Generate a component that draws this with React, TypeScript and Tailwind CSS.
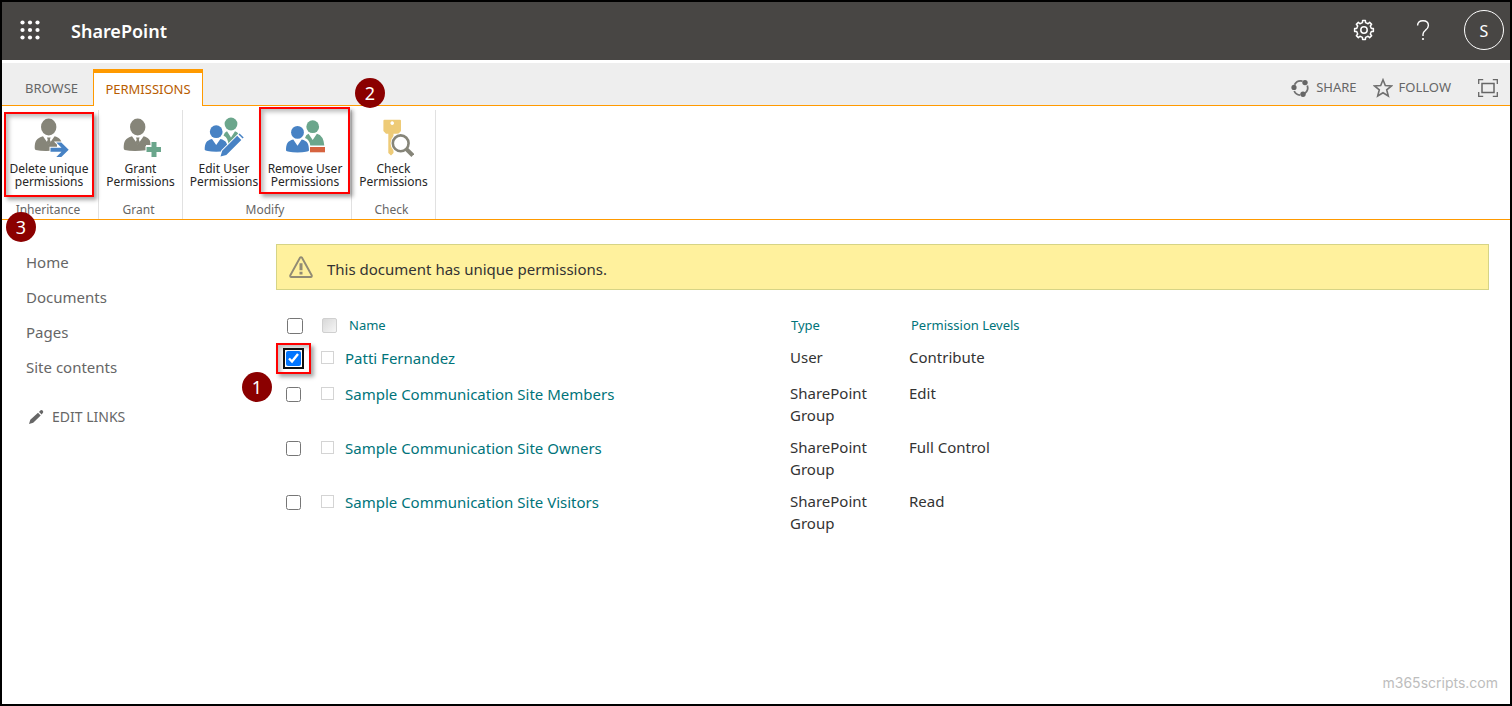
import React from "react";

const PERSON = "#868579";
const BLUE = "#4782c4";
const GREEN = "#6ba68c";

function gearPath(cx: number, cy: number, teeth: number, outer: number, inner: number) {
  const points: string[] = [];
  const step = (Math.PI * 2) / teeth;
  for (let i = 0; i < teeth; i++) {
    const a = i * step - Math.PI / 2;
    const corners: [number, number][] = [
      [a - step * 0.27, inner],
      [a - step * 0.19, outer],
      [a + step * 0.19, outer],
      [a + step * 0.27, inner],
    ];
    corners.forEach(([t, r]) => points.push(`${(cx + r * Math.cos(t)).toFixed(2)} ${(cy + r * Math.sin(t)).toFixed(2)}`));
  }
  return `M${points.join("L")}Z`;
}

function Waffle() {
  const pos = [2.5, 10, 17.5];
  return (
    <svg className="size-5" viewBox="0 0 20 20" fill="white" aria-hidden="true">
      {pos.map((y) => pos.map((x) => <circle key={`${x}-${y}`} cx={x} cy={y} r="2.1" />))}
    </svg>
  );
}

function Gear() {
  return (
    <svg className="size-[22px]" viewBox="0 0 22 22" fill="none" stroke="white" strokeWidth="1.5" strokeLinejoin="round" aria-hidden="true">
      <path d={gearPath(11, 11, 8, 9.5, 7.5)} />
      <circle cx="11" cy="11" r="3.2" />
    </svg>
  );
}

function Help() {
  return (
    <svg className="h-[22px] w-4" viewBox="0 0 16 22" fill="none" stroke="white" strokeWidth="1.4" aria-hidden="true">
      <path d="M2.6 6.6C2.6 3.4 4.9 1.7 8 1.7s5.4 1.8 5.4 4.800c0 2.400-1.400 3.500-2.900 4.700C9 12.400 8 13.300 8 15.200V17" />
      <circle cx="8" cy="20" r="1.1" fill="white" stroke="none" />
    </svg>
  );
}

function ShareIcon() {
  return (
    <svg className="size-5" viewBox="0 0 20 20" fill="none" stroke="#707070" strokeWidth="1.8" aria-hidden="true">
      <path d="M4.500 6.800A7.200 7.200 0 0 1 12.500 3.200M17.300 7.600a7.200 7.200 0 0 1-2.600 8M10 17.200A7.200 7.200 0 0 1 4.200 13" />
      <g fill="#666" stroke="none">
        <circle cx="4" cy="9.400" r="2.600" />
        <circle cx="15" cy="4.600" r="2.700" />
        <circle cx="13" cy="16.200" r="2.700" />
      </g>
    </svg>
  );
}

function StarIcon() {
  return (
    <svg className="size-5" viewBox="0 0 20 20" fill="none" stroke="#707070" strokeWidth="1.6" aria-hidden="true">
      <path d="M10 1.800l2.300 5.700 6.200.400-4.800 3.900 1.600 6.200L10 14.700 4.700 18l1.600-6.200L1.500 7.900l6.200-.400z" />
    </svg>
  );
}

function FocusIcon() {
  return (
    <svg className="h-[18px] w-5" viewBox="0 0 20 18" fill="none" stroke="#666" aria-hidden="true">
      <path strokeWidth="1.300" d="M.7 5V.7h4.500M14.800.7h4.500V5M19.300 13v4.300h-4.500M5.200 17.300H.7V13" />
      <rect x="4" y="4.500" width="12" height="9" strokeWidth="1.500" />
    </svg>
  );
}

function SinglePerson() {
  return (
    <g fill={PERSON}>
      <ellipse cx="16.700" cy="10" rx="7.700" ry="8.400" />
      <path d="M2.700 31C2.700 24.500 4.500 21 11 19.300L16.800 27.500 22.600 19.300C27.500 20.700 29.500 23 30 28L25 28V33.300Q12 35 3.700 33Q2.700 32.500 2.700 31Z" />
      <path d="M15 20.500h3.600l-.7 2.300 1 2.500-2.100 3-2.100-3 1-2.500z" />
    </g>
  );
}

function DeleteUniqueIcon() {
  return (
    <svg className="size-10" viewBox="0 0 40 40" aria-hidden="true">
      <g transform="translate(3 0)">
        <SinglePerson />
      </g>
      <path d="M21.500 30.800H32.500L27.300 25.600H32.300L39.700 32.800 32.300 39.900H27.300L32.500 34.700H21.500Z" fill={BLUE} stroke="white" strokeWidth="2" paintOrder="stroke" />
    </svg>
  );
}

function GrantIcon() {
  return (
    <svg className="size-10" viewBox="0 0 40 40" aria-hidden="true">
      <SinglePerson />
      <path d="M30.500 25h5v5h5v5h-5v5h-5v-5h-5v-5h5z" fill={GREEN} stroke="white" strokeWidth="2" paintOrder="stroke" />
    </svg>
  );
}

function Bust({ x, y, fill }: { x: number; y: number; fill: string }) {
  return (
    <g transform={`translate(${x} ${y})`} fill={fill}>
      <circle cx="11.500" cy="6.400" r="6.400" />
      <path d="M0 24.500C0 18 1.500 15 7.300 13.600L11.500 19.800 15.700 13.600C21.500 15 23 18 23 24.500Q22.500 26 11.500 26.500Q.5 26 0 24.500Z" />
    </g>
  );
}

function EditUserIcon() {
  return (
    <svg className="size-10" viewBox="0 0 40 40" aria-hidden="true">
      <circle cx="27" cy="7" r="6.400" fill={GREEN} />
      <path d="M19.500 18.500Q20.500 15 23 14.300L27 20.500 31 14.300Q34.500 15.300 35.500 19L26 28.500H24.500Q24.500 21 19.500 18.500Z" fill={GREEN} />
      <Bust x={0.7} y={8.3} fill={BLUE} />
      <path d="M16.500 39.500L18.200 33.800 33.200 18.800 37.300 22.900 22.300 37.900ZM34.500 17.500L35.600 16.500 39.700 20.600 38.600 21.600Z" fill={BLUE} stroke="white" strokeWidth="2" paintOrder="stroke" />
    </svg>
  );
}

function RemoveUserIcon() {
  return (
    <svg className="size-10" viewBox="0 0 40 40" aria-hidden="true">
      <circle cx="27.700" cy="9.700" r="6.400" fill={GREEN} />
      <path d="M20 21Q20.800 17.800 23.500 16.800L27.700 23 31.900 16.800Q38.500 18.500 39.300 28.500H25.300Q24.500 22.500 20 21Z" fill={GREEN} />
      <Bust x={1} y={9} fill={BLUE} />
      <rect x="25" y="30" width="15" height="5.300" fill="#d6633f" stroke="white" strokeWidth="2" paintOrder="stroke" />
    </svg>
  );
}

function CheckIcon() {
  return (
    <svg className="size-10" viewBox="0 0 40 40" aria-hidden="true">
      <path fillRule="evenodd" fill="#eecb77" d="M10.500 2.700H26Q27 2.700 27 3.700V14L24.500 16.700H19.500V36L17 38.500 14.300 36V16.700H12L9.400 14V3.700Q9.400 2.700 10.500 2.700ZM18.200 4.300a1.800 1.800 0 1 0 .01 0Z" />
      <circle cx="26.700" cy="26.300" r="7.900" fill="white" stroke="white" strokeWidth="4.500" />
      <path d="M32.300 32L38.800 38.500" stroke="#868579" strokeWidth="4" />
      <circle cx="26.700" cy="26.300" r="7.900" fill="white" stroke="#868579" strokeWidth="2.600" />
    </svg>
  );
}

function WarningIcon() {
  return (
    <svg className="h-[22px] w-6" viewBox="0 0 24 22" fill="none" stroke="#918b74" aria-hidden="true">
      <path strokeWidth="1.900" strokeLinejoin="round" d="M11 1.700Q12 .5 13 1.700L22.800 19.500Q23 21 21.800 21H2.200Q1 21 1.200 19.500Z" />
      <path strokeWidth="3" d="M12 7.200V14.200M12 15.800V18.400" />
    </svg>
  );
}

function PencilIcon() {
  return (
    <svg className="size-4" viewBox="0 0 16 16" fill="#666" aria-hidden="true">
      <path d="M1 15l1.300-4.200L10 3.800l2.700 2.700-7.500 7.200zM11 2.900L12.300 1.600Q13.700.6 14.800 1.700q1 1.200 0 2.400L13.600 5.500z" />
    </svg>
  );
}

function Badge({ n, className }: { n: number; className: string }) {
  return (
    <span className={`absolute z-10 flex size-[30px] items-center justify-center rounded-full bg-[#8b0000] font-['Noto_Sans',sans-serif] text-lg leading-none text-white ${className}`}>
      {n}
    </span>
  );
}

function Highlight({ className }: { className: string }) {
  return <span className={`pointer-events-none absolute border-2 border-[#f00] shadow-[3px_3px_4px_rgba(0,0,0,0.35),inset_3px_3px_4px_rgba(0,0,0,0.25)] ${className}`} />;
}

function RibbonButton({ icon, lines, className, children }: { icon: React.ReactNode; lines: [string, string]; className: string; children?: React.ReactNode }) {
  return (
    <button className={`relative flex h-[84px] flex-col items-center gap-[5px] pt-[7px] text-[12px] leading-[13px] whitespace-nowrap text-[#262626] ${className}`}>
      {icon}
      <span>
        {lines[0]}
        <br />
        {lines[1]}
      </span>
      {children}
    </button>
  );
}

function RibbonGroup({ label, children }: { label: string; children: React.ReactNode }) {
  return (
    <section className="flex flex-col justify-between border-r border-[#e1e1e1]" aria-label={label}>
      <div className="flex">{children}</div>
      <h2 className="pr-1 text-center text-[12px] leading-[18px] text-[#666]">{label}</h2>
    </section>
  );
}

const rows = [
  { name: "Patti Fernandez", type: "User", level: "Contribute", checked: true },
  { name: "Sample Communication Site Members", type: "SharePoint Group", level: "Edit" },
  { name: "Sample Communication Site Owners", type: "SharePoint Group", level: "Full Control" },
  { name: "Sample Communication Site Visitors", type: "SharePoint Group", level: "Read" },
];

export default function App() {
  return (
    <div className="relative flex min-h-screen flex-col border-2 border-black bg-white font-['Noto_Sans',sans-serif] text-[15px] text-[#333]">
      <header className="flex h-[58px] items-center bg-[#484644] pr-1.5 pb-0.5 pl-[18px] text-white">
        <button aria-label="App launcher">
          <Waffle />
        </button>
        <a href="#" className="ml-[31px] pt-0.5 text-lg font-semibold">SharePoint</a>
        <div className="ml-auto flex items-center">
          <button aria-label="Settings">
            <Gear />
          </button>
          <button aria-label="Help" className="ml-10">
            <Help />
          </button>
          <button aria-label="Account" className="ml-[33px] flex size-10 items-center justify-center rounded-full border border-white pt-0.5 text-base">S</button>
        </div>
      </header>

      <div className="mt-[3px] flex h-[43px] shrink-0 items-end border-b border-[#ff9a00] bg-[#eee] text-[13px] text-[#666]">
        <nav className="flex items-end">
          <a href="#" className="flex h-8 w-[91px] items-center justify-center pl-2">BROWSE</a>
          <a href="#" className="-mb-px flex h-[37px] w-[110px] items-center justify-center border-x border-t-4 border-[#ff9a00] bg-white text-[#b85c00]">PERMISSIONS</a>
        </nav>
        <div className="ml-auto flex h-[35px] items-center pr-3">
          <button className="flex items-center gap-1.5">
            <ShareIcon /> SHARE
          </button>
          <button className="ml-4 flex items-center gap-1.5">
            <StarIcon /> FOLLOW
          </button>
          <button aria-label="Focus on content" className="ml-[27px]">
            <FocusIcon />
          </button>
        </div>
      </div>

      <div className="relative flex h-[114px] shrink-0 border-b border-[#ff9a00] pt-1">
        <RibbonGroup label="Inheritance">
          <RibbonButton icon={<DeleteUniqueIcon />} lines={["Delete unique", "permissions"]} className="mr-0.5 w-[94px]">
            <Highlight className="top-0.5 left-0.5 h-[85px] w-[90px]" />
          </RibbonButton>
        </RibbonGroup>
        <RibbonGroup label="Grant">
          <RibbonButton icon={<GrantIcon />} lines={["Grant", "Permissions"]} className="w-[83px]" />
        </RibbonGroup>
        <RibbonGroup label="Modify">
          <RibbonButton icon={<EditUserIcon />} lines={["Edit User", "Permissions"]} className="w-[82px]" />
          <RibbonButton icon={<RemoveUserIcon />} lines={["Remove User", "Permissions"]} className="mr-1.5 w-20">
            <Highlight className="-top-[3px] -left-1.5 h-[87px] w-[91px]" />
          </RibbonButton>
        </RibbonGroup>
        <RibbonGroup label="Check">
          <RibbonButton icon={<CheckIcon />} lines={["Check", "Permissions"]} className="w-[83px]" />
        </RibbonGroup>
        <Badge n={2} className="-top-7 left-[353px]" />
        <Badge n={3} className="top-[106px] left-1" />
      </div>

      <div className="flex grow">
        <aside className="w-[274px] shrink-0 pt-[26px] pl-6 text-[#666]">
          <ul className="flex flex-col gap-[3px] leading-8">
            {["Home", "Documents", "Pages", "Site contents"].map((item) => (
              <li key={item}>
                <a href="#">{item}</a>
              </li>
            ))}
          </ul>
          <button className="mt-6 flex items-center gap-2 pl-0.5 text-sm">
            <PencilIcon /> EDIT LINKS
          </button>
        </aside>

        <main className="grow pt-6 pr-[21px]">
          <div className="flex h-[46px] items-center gap-3.5 border border-[#d6d486] bg-[#fff19d] px-3">
            <WarningIcon />
            <p className="pt-1">This document has unique permissions.</p>
          </div>

          <table className="mt-5 w-full table-fixed text-left">
            <colgroup>
              <col className="w-[45px]" />
              <col className="w-6" />
              <col className="w-[445px]" />
              <col className="w-[119px]" />
              <col />
            </colgroup>
            <thead>
              <tr className="h-[31px] text-[13px] text-[#00747a]">
                <th>
                  <input type="checkbox" aria-label="Select all" className="ml-[11px] block size-4" />
                </th>
                <th>
                  <span className="ml-px block size-[15px] rounded-xs border border-[#d0d0d0] bg-linear-to-br from-[#d8d8d8] to-[#f6f6f6]" />
                </th>
                <th className="pl-1 font-normal"><a href="#">Name</a></th>
                <th className="pl-px font-normal"><a href="#">Type</a></th>
                <th className="pl-0.5 font-normal"><a href="#">Permission Levels</a></th>
              </tr>
            </thead>
            <tbody className="align-top leading-[22px]">
              {rows.map((row) => (
                <tr key={row.name} className="h-9">
                  <td className="pt-[10px]">
                    <div className="relative ml-2.5 size-[15px]">
                      <input
                        type="checkbox"
                        aria-label={`Select ${row.name}`}
                        defaultChecked={row.checked}
                        className={row.checked ? "block size-[15px] rounded-xs outline-2 outline-offset-1 outline-[#101010]" : "block size-[15px]"}
                      />
                      {row.checked && (
                        <>
                          <Highlight className="-top-2 -left-2.5 h-[31px] w-[35px]" />
                          <Badge n={1} className="top-[21px] -left-11" />
                        </>
                      )}
                    </div>
                  </td>
                  <td className="pt-[10px]">
                    <span className="block size-[13px] border border-[#d4d4d4] bg-white" />
                  </td>
                  <td className="pt-1.5 text-[#00747a]"><a href="#">{row.name}</a></td>
                  <td className="pt-[5px] pr-6 pb-[5px]">{row.type}</td>
                  <td className="pt-[5px]">{row.level}</td>
                </tr>
              ))}
            </tbody>
          </table>
        </main>
      </div>

      <footer className="flex justify-end pr-3 pb-3 font-['Inter',sans-serif] text-sm leading-[18px] text-[#bdbdbd]">m365scripts.com</footer>
    </div>
  );
}
